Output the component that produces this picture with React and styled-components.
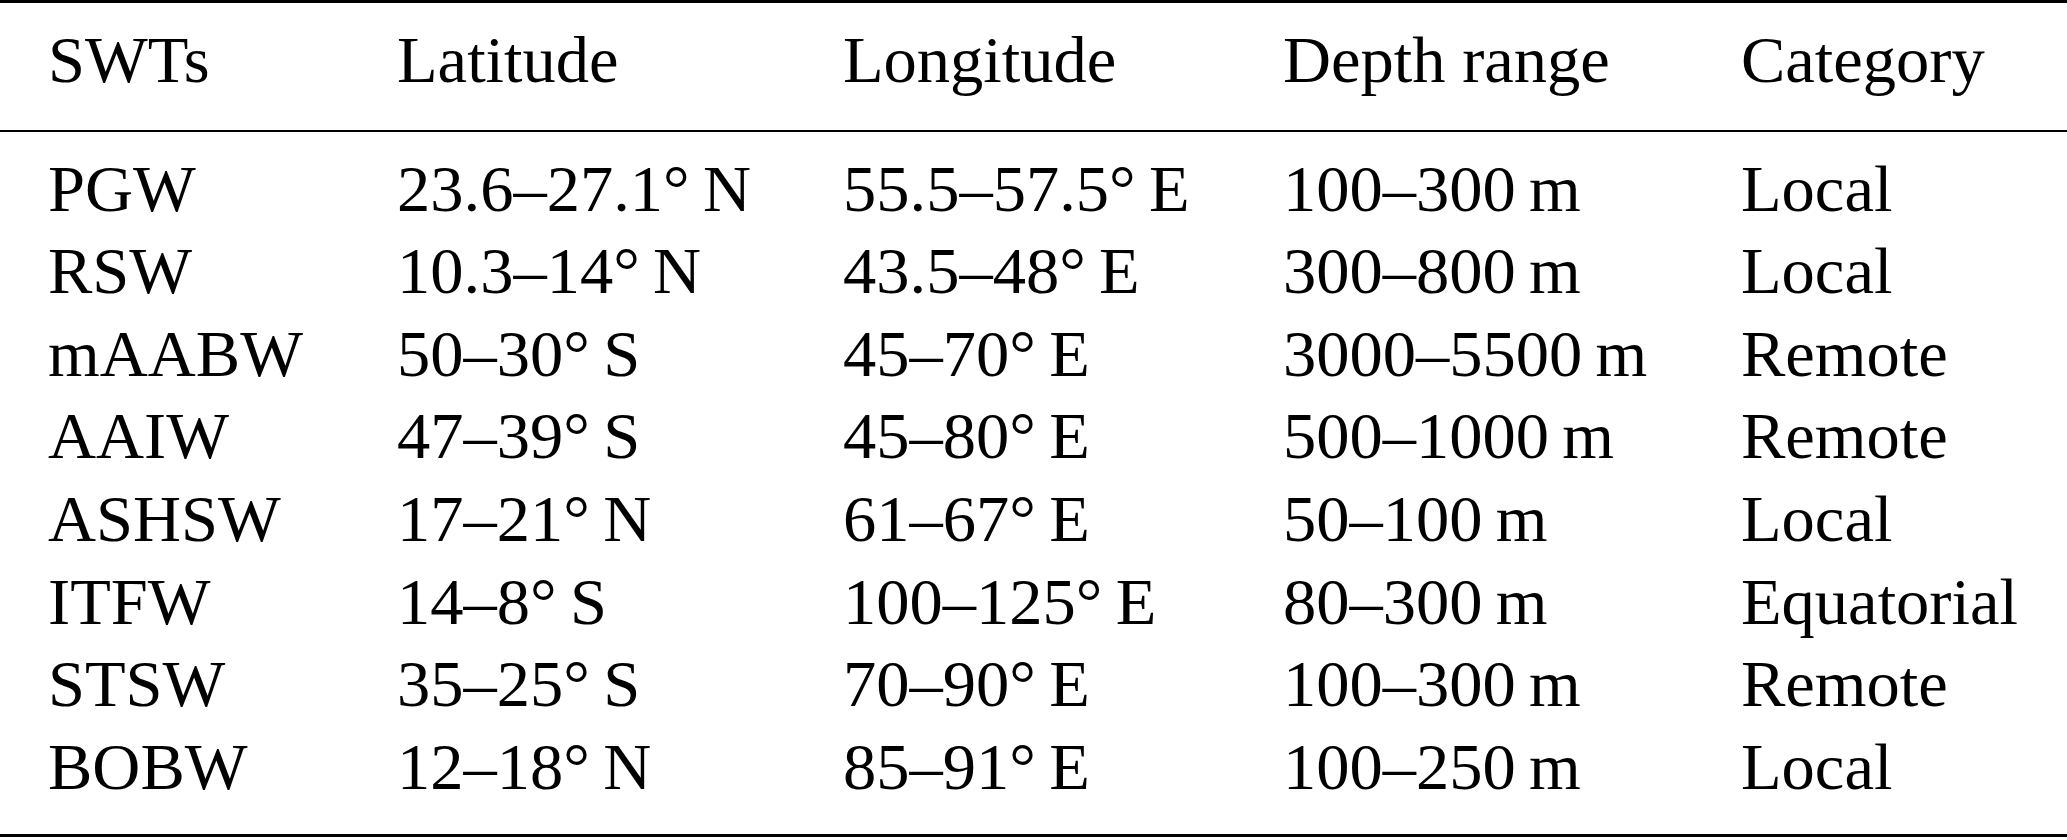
import React from 'react';
import styled, { createGlobalStyle } from 'styled-components';

const Global = createGlobalStyle`
  html, body {
    margin: 0;
    padding: 0;
    background: #fff;
  }
`;

const Table = styled.div`
  width: 100%;
  font-family: "Liberation Serif", "Times New Roman", serif;
  font-size: 66.5px;
  line-height: 82.6px;
  color: #000;
  border-top: 3px solid #000;
  border-bottom: 3px solid #000;
`;

const Section = styled.div`
  padding: ${(p) => p.$pad};
  border-bottom: ${(p) => (p.$rule ? '2.5px solid #000' : 'none')};
`;

const Row = styled.div`
  display: grid;
  grid-template-columns: 349px 446px 440px 458px 1fr;
  padding-left: 48px;
  white-space: nowrap;
`;

const Cell = styled.span`
  display: block;
`;

const T = '\u2009';

const header = ['SWTs', 'Latitude', 'Longitude', 'Depth range', 'Category'];

const rows = [
  ['PGW', `23.6–27.1°${T}N`, `55.5–57.5°${T}E`, `100–300${T}m`, 'Local'],
  ['RSW', `10.3–14°${T}N`, `43.5–48°${T}E`, `300–800${T}m`, 'Local'],
  ['mAABW', `50–30°${T}S`, `45–70°${T}E`, `3000–5500${T}m`, 'Remote'],
  ['AAIW', `47–39°${T}S`, `45–80°${T}E`, `500–1000${T}m`, 'Remote'],
  ['ASHSW', `17–21°${T}N`, `61–67°${T}E`, `50–100${T}m`, 'Local'],
  ['ITFW', `14–8°${T}S`, `100–125°${T}E`, `80–300${T}m`, 'Equatorial'],
  ['STSW', `35–25°${T}S`, `70–90°${T}E`, `100–300${T}m`, 'Remote'],
  ['BOBW', `12–18°${T}N`, `85–91°${T}E`, `100–250${T}m`, 'Local'],
];

export default function App() {
  return (
    <>
      <Global />
      <Table>
        <Section $pad="16px 0 28px" $rule>
          <Row>
            {header.map((h) => (
              <Cell key={h}>{h}</Cell>
            ))}
          </Row>
        </Section>
        <Section $pad="16px 0 26px">
          {rows.map((r) => (
            <Row key={r[0]}>
              {r.map((c, i) => (
                <Cell key={i}>{c}</Cell>
              ))}
            </Row>
          ))}
        </Section>
      </Table>
    </>
  );
}
